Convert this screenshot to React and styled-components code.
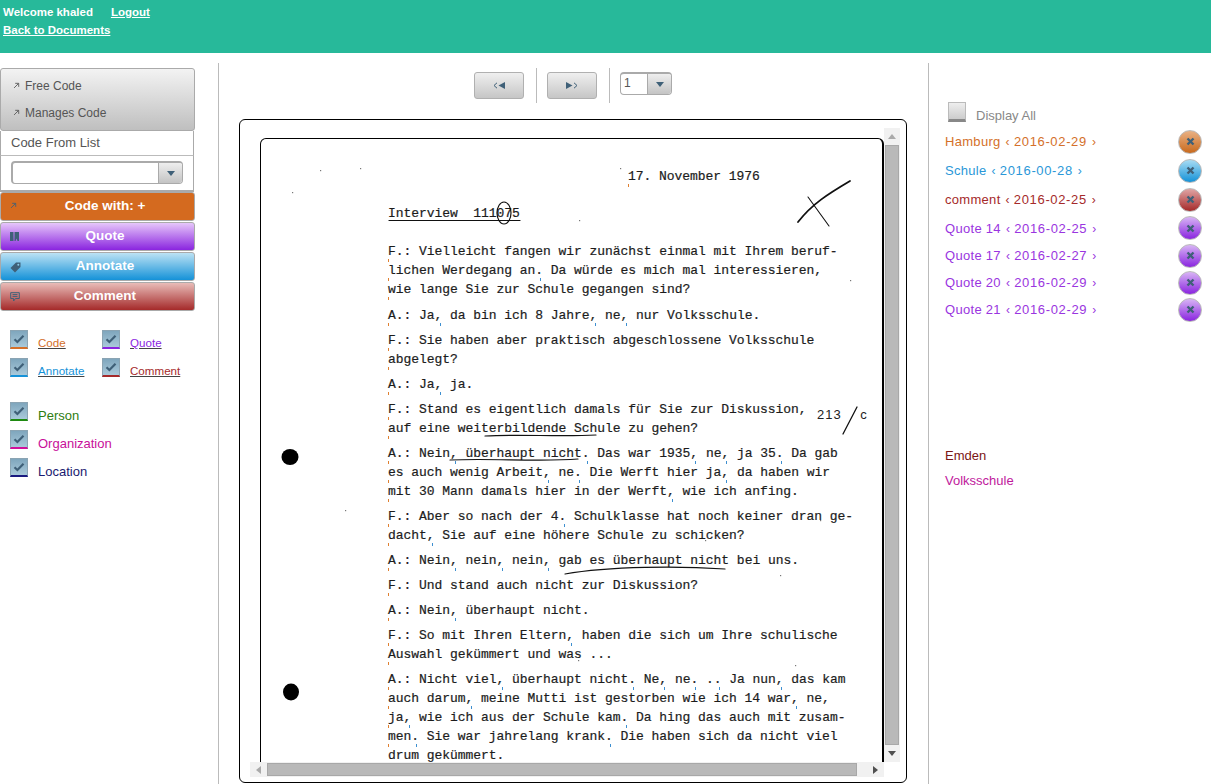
import React from "react";
import styled, { createGlobalStyle } from "styled-components";

const Global = createGlobalStyle`
  html, body { margin: 0; padding: 0; background: #fff; }
  body { font-family: "Liberation Sans", Arial, sans-serif; height: 784px; overflow: hidden; }
  * { box-sizing: border-box; }
`;

const Page = styled.div`display: flex; flex-direction: column; height: 784px; width: 1211px; overflow: hidden;`;
const Header = styled.header`
  height: 53px; background: #27b99a; padding: 5px 3px 0; color: #fff; font-size: 11.5px; font-weight: 700; line-height: 14px;
`;
const HeaderRow = styled.div`display: flex; gap: 18px; height: 18px;`;
const HeaderLink = styled.a`color: #fff; text-decoration: underline;`;
const Body = styled.div`display: grid; grid-template-columns: 218px 711px 1fr; margin-top: 10px; flex: 1; min-height: 0;`;

const Left = styled.aside`padding-top: 5px;`;
const ToolPanel = styled.div`
  width: 195px; height: 63px; border: 1px solid #aaa; border-radius: 3px;
  background: linear-gradient(#f3f3f3, #bfbfbf); padding: 3px 0 0 12px;
  display: flex; flex-direction: column;
`;
const ToolItem = styled.div`
  display: flex; align-items: center; gap: 5px; height: 27px; font-size: 12px; color: #555;
`;
const ListHead = styled.div`
  width: 194px; height: 25px; border: 1px solid #aaa; border-top: 0; border-bottom-color: #bbb;
  padding-left: 10px; font-size: 13px; line-height: 24px; color: #555;
`;
const ListBody = styled.div`
  width: 194px; height: 36px; border: 1px solid #aaa; border-width: 0 1px 2px; padding: 5px 0 0 10px;
`;
const Combo = styled.div`
  display: flex; width: 172px; height: 23px; border: 1px solid #aaa; border-top-width: 2px; border-left-width: 2px; border-radius: 4px; overflow: hidden; background: #fff;
`;
const ComboField = styled.div`flex: 1; font-size: 12px; color: #555; padding: 0 3px; line-height: 18px;`;
const ComboArrow = styled.div`
  width: 24px; background: linear-gradient(#eee, #c4c4c4); border-left: 1px solid #aaa;
  display: flex; align-items: center; justify-content: center;
  &::after { content: ""; border: 4px solid transparent; border-top: 5px solid #3f6078; border-bottom: 0; }
`;
const gradients = {
  code: "#d46a1f, #d46a1f",
  quote: "#e6c6fa, #8a25df",
  annotate: "#bce2f4, #1592d8",
  comment: "#e8bcb8, #a52a2a",
};
const ActionButton = styled.button`
  display: block; position: relative; width: 195px; height: 29px; margin: 0 0 1px; padding: 0 0 2px 15px;
  border: 1px solid #aaa; border-radius: 3px; background: linear-gradient(${p => gradients[p.$kind]});
  color: #fff; font: 700 13.5px "Liberation Sans", Arial, sans-serif; text-align: center;
`;
const ActionIcon = styled.span`position: absolute; left: 9px; top: 9px; color: #3f6078; display: flex;`;
const ActionStack = styled.div``;

const Checks = styled.div`
  display: grid; grid-template-columns: 92px 92px; grid-auto-rows: 28px; padding-left: 10px; margin-top: 19px;
`;
const Checks2 = styled(Checks)`grid-template-columns: 180px; margin-top: 16px;`;
const CheckCell = styled.div`display: flex; align-items: flex-start; gap: 10px;`;
const Box = styled.span`
  width: 18px; height: 19px; flex: none; display: flex; align-items: center; justify-content: center;
  background: linear-gradient(#7fa6bd, #a9c9da); border: 1px solid #8ba4b3; border-bottom: 2px solid ${p => p.$c}; color: #3f6078;
`;
const CheckLink = styled.a`
  font-size: 11.6px; color: ${p => p.$c}; text-decoration: underline; text-decoration-color: #444; line-height: 14px; margin-top: 6px;
`;
const CheckLabel = styled.span`font-size: 13px; color: ${p => p.$c}; line-height: 15px; margin-top: 6px;`;

const Center = styled.main`border-left: 1px solid #bbb; border-right: 1px solid #bbb; display: flex; flex-direction: column;`;
const Toolbar = styled.div`height: 56px; display: flex; justify-content: center; align-items: flex-start; padding: 5px 1px 0 0;`;
const NavButton = styled.button`
  width: 50px; height: 27px; margin-top: 4px; padding: 0; border: 1px solid #b0b0b0; border-radius: 3px;
  background: linear-gradient(#efefef, #c6c6c6); display: flex; align-items: center; justify-content: center; color: #3f6078;
`;
const Sep = styled.div`width: 1px; height: 35px; background: #bbb; margin: 0 10px 0 12px;`;
const PageCombo = styled.div`
  display: flex; width: 52px; height: 23px; margin-top: 4px; border: 1px solid #aaa; border-top-width: 2px; border-radius: 4px; overflow: hidden; background: #fff;
`;
const PageArrow = styled(ComboArrow)`width: 24px;`;
const Frame = styled.div`
  width: 668px; height: 664px; margin-left: 20px; border: 1px solid #000; border-radius: 6px; background: #fff;
  padding: 8px 6px 5px 10px; display: grid; grid-template-columns: 634px 16px; grid-template-rows: 634px 15px;
`;
const SheetCell = styled.div`padding: 10px 0 0 10px; min-height: 0; overflow: hidden;`;
const Sheet = styled.div`
  position: relative; height: 100%; overflow: hidden; border: 1px solid #000; border-width: 1px 2px 0 1px; border-radius: 6px 6px 0 0;
  padding: 28px 0 0 127px; font-family: "Liberation Mono", monospace; font-size: 13px; letter-spacing: -.05px; line-height: 19px; color: #1c1c1c; background: #fff;
  -webkit-text-stroke: .2px #1c1c1c;
`;
const Para = styled.div`margin-bottom: ${p => p.$mb ?? 6}px; margin-left: ${p => p.$ml ?? 0}px; white-space: pre;`;
const DocLine = styled.div`
  position: relative; height: 19px;
  &::before { content: ""; position: absolute; left: 0; bottom: -1px; width: 1px; height: 3px; background: ${p => p.$a ? "#e08030" : "transparent"}; }
`;
const Mark = styled.span`
  position: relative;
  &::after { content: ""; position: absolute; left: 5px; top: 15px; width: 1px; height: 3px; background: #3d8fd0; }
`;
const Overlay = styled.svg`position: absolute; left: 0; top: 0;`;
const Hand = styled.span`
  position: absolute; left: 556px; top: 268px; font: 13px/16px "Liberation Sans", sans-serif; letter-spacing: 1px; color: #222; -webkit-text-stroke: 0;
`;
const VBar = styled.div`background: #f1f1f1; display: flex; flex-direction: column; align-items: center; padding: 0 1px;`;
const HBar = styled.div`background: #f1f1f1; display: flex; align-items: center; height: 15px;`;
const Thumb = styled.div`flex: 1; background: #b9b9b9; border: 1px solid #a8a8a8;`;
const ArrowSlot = styled.div`
  flex: none; width: ${p => (p.$h ? "17px" : "14px")}; height: ${p => (p.$h ? "15px" : "17px")}; display: flex; align-items: center; justify-content: center;
  &::after { content: ""; border: 4px solid transparent; ${p => `border-${p.$dir}: 5px solid ${p.$c}; border-${{top:"bottom",bottom:"top",left:"right",right:"left"}[p.$dir]}: 0;`} }
`;
const ThumbV = styled(Thumb)`width: 14px;`;
const ThumbH = styled(Thumb)`height: 13px; margin: 0 10px 0 0;`;

const Right = styled.aside`padding: 39px 9px 0 16px;`;
const DisplayAll = styled.div`display: flex; align-items: flex-start; gap: 10px; padding-left: 3px; height: 20px; font-size: 13px; line-height: 15px; color: #888; margin-bottom: 5px;`;
const DisplayText = styled.span`margin-top: 6px;`;
const GrayBox = styled.span`width: 18px; height: 20px; background: linear-gradient(#eee, #ccc); border: 1px solid #bbb; border-bottom: 3px solid #888;`;
const Item = styled.div`
  display: flex; align-items: center; justify-content: space-between; height: ${p => p.$h}px; color: ${p => p.$c}; font-size: 13px; letter-spacing: .3px;
`;
const ItemOpen = styled.span`font-size: 12px; margin: 0 4px 0 5px;`;
const ItemClose = styled.span`font-size: 12px; margin-left: 5px;`;
const ItemDate = styled.span`letter-spacing: .65px;`;
const XButton = styled.span`
  width: 24px; height: 24px; border-radius: 50%; border: 1px solid #bbb; background: linear-gradient(${p => p.$g}); display: flex; align-items: center; justify-content: center; color: #3f6078; flex: none;
`;
const Entities = styled.div`margin-top: 120px; font-size: 13px;`;
const Entity = styled.div`height: 25px; line-height: 25px; color: ${p => p.$c};`;

const Check = () => (
  <svg width="12" height="10" viewBox="0 0 12 10"><path d="M1.5 5.2 4.4 8 10.5 1.8" fill="none" stroke="currentColor" strokeWidth="2.2" /></svg>
);
const Arrow = ({ c = "#555" }) => (
  <svg width="7" height="7" viewBox="0 0 8 8"><path d="M1.2 6.8 6.2 1.8M2.5 1.5h4v4" fill="none" stroke={c} strokeWidth="1" /></svg>
);
const BookIcon = () => (
  <svg width="9" height="9" viewBox="0 0 9 9"><path d="M0 0h3.5v9H0zM4.5 0H9v9H7.5L6.7 6.5 5.5 9h-1z" fill="currentColor" /></svg>
);
const TagIcon = () => (
  <svg width="11" height="11" viewBox="0 0 11 11"><path d="M6 .5h4.5V5L5 10.5.5 6z" fill="currentColor" /><circle cx="8.3" cy="2.7" r="1" fill="#8ccbe8" /></svg>
);
const ChatIcon = () => (
  <svg width="10" height="10" viewBox="0 0 10 10"><path d="M.7.7h8.6v5.8H5.5L3.6 9V6.5H.7zM2.5 2.6h5M2.5 4.4h5" fill="none" stroke="currentColor" strokeWidth="1" /></svg>
);
const Cross = () => (
  <svg width="9" height="9" viewBox="0 0 9 9"><path d="M1.5 1.5l6 6M7.5 1.5l-6 6" stroke="currentColor" strokeWidth="2.4" /></svg>
);
const PrevIcon = () => (
  <svg width="12" height="7" viewBox="0 0 12 7"><path d="M4 .8 1 3.5 4 6.2" fill="none" stroke="currentColor" /><path d="M12 0v7L5.5 3.5z" fill="currentColor" /></svg>
);
const NextIcon = () => (
  <svg width="12" height="7" viewBox="0 0 12 7"><path d="M0 0v7l6.5-3.5z" fill="currentColor" /><path d="M8 .8 11 3.5 8 6.2" fill="none" stroke="currentColor" /></svg>
);

const doc = [
  ["F.: Vielleicht fangen wir zunächst einmal mit Ihrem beruf-", "lichen Werdegang an. Da würde es mich mal interessieren,", "wie lange Sie zur Schule gegangen sind?"],
  ["A.: Ja, da bin ich 8 Jahre, ne, nur Volksschule."],
  ["F.: Sie haben aber praktisch abgeschlossene Volksschule", "abgelegt?"],
  ["A.: Ja, ja."],
  ["F.: Stand es eigentlich damals für Sie zur Diskussion,", "auf eine weiterbildende Schule zu gehen?"],
  ["A.: Nein, überhaupt nicht. Das war 1935, ne, ja 35. Da gab", "es auch wenig Arbeit, ne. Die Werft hier ja, da haben wir", "mit 30 Mann damals hier in der Werft, wie ich anfing."],
  ["F.: Aber so nach der 4. Schulklasse hat noch keiner dran ge-", "dacht, Sie auf eine höhere Schule zu schicken?"],
  ["A.: Nein, nein, nein, gab es überhaupt nicht bei uns."],
  ["F.: Und stand auch nicht zur Diskussion?"],
  ["A.: Nein, überhaupt nicht."],
  ["F.: So mit Ihren Eltern, haben die sich um Ihre schulische", "Auswahl gekümmert und was ..."],
  ["A.: Nicht viel, überhaupt nicht. Ne, ne. .. Ja nun, das kam", "auch darum, meine Mutti ist gestorben wie ich 14 war, ne,", "ja, wie ich aus der Schule kam. Da hing das auch mit zusam-", "men. Sie war jahrelang krank. Die haben sich da nicht viel", "drum gekümmert."],
];

const renderLine = (s) =>
  s.split(/([,.](?=\s))/).map((t, i) => (/^[,.]$/.test(t) ? <Mark key={i}>{t}</Mark> : <React.Fragment key={i}>{t}</React.Fragment>));

const specks = [[292,192],[360,168],[579,220],[345,510],[820,520],[578,660],[795,665],[780,575],[320,170],[705,540],[850,280],[620,168]];

const items = [
  ["Hamburg", "2016-02-29", "#d4702a", "#e9b184, #c96a1d", 29],
  ["Schule", "2016-00-28", "#2a97d8", "#a8dcf3, #1592d8", 29],
  ["comment", "2016-02-25", "#a52a2a", "#e0a5a5, #a52a2a", 29],
  ["Quote 14", "2016-02-25", "#9a35e0", "#d8b5f5, #8a25df", 28],
  ["Quote 17", "2016-02-27", "#9a35e0", "#d8b5f5, #8a25df", 27],
  ["Quote 20", "2016-02-29", "#9a35e0", "#d8b5f5, #8a25df", 27],
  ["Quote 21", "2016-02-29", "#9a35e0", "#d8b5f5, #8a25df", 27],
];

export default function App() {
  return (
    <Page>
      <Global />
      <Header>
        <HeaderRow>Welcome khaled <HeaderLink>Logout</HeaderLink></HeaderRow>
        <HeaderLink>Back to Documents</HeaderLink>
      </Header>
      <Body>
        <Left>
          <ToolPanel>
            <ToolItem><Arrow />Free Code</ToolItem>
            <ToolItem><Arrow />Manages Code</ToolItem>
          </ToolPanel>
          <ListHead>Code From List</ListHead>
          <ListBody>
            <Combo><ComboField /><ComboArrow /></Combo>
          </ListBody>
          <ActionStack>
            <ActionButton $kind="code"><ActionIcon><Arrow c="#3f6078" /></ActionIcon>Code with: +</ActionButton>
            <ActionButton $kind="quote"><ActionIcon><BookIcon /></ActionIcon>Quote</ActionButton>
            <ActionButton $kind="annotate"><ActionIcon><TagIcon /></ActionIcon>Annotate</ActionButton>
            <ActionButton $kind="comment"><ActionIcon><ChatIcon /></ActionIcon>Comment</ActionButton>
          </ActionStack>
          <Checks>
            <CheckCell><Box $c="#d4702a"><Check /></Box><CheckLink $c="#d4702a">Code</CheckLink></CheckCell>
            <CheckCell><Box $c="#8a25df"><Check /></Box><CheckLink $c="#8a25df">Quote</CheckLink></CheckCell>
            <CheckCell><Box $c="#1592d8"><Check /></Box><CheckLink $c="#1592d8">Annotate</CheckLink></CheckCell>
            <CheckCell><Box $c="#a52a2a"><Check /></Box><CheckLink $c="#a52a2a">Comment</CheckLink></CheckCell>
          </Checks>
          <Checks2>
            <CheckCell><Box $c="#1e8a10"><Check /></Box><CheckLabel $c="#2e7d10">Person</CheckLabel></CheckCell>
            <CheckCell><Box $c="#d0109a"><Check /></Box><CheckLabel $c="#c8109a">Organization</CheckLabel></CheckCell>
            <CheckCell><Box $c="#1a1a80"><Check /></Box><CheckLabel $c="#1a1a70">Location</CheckLabel></CheckCell>
          </Checks2>
        </Left>
        <Center>
          <Toolbar>
            <NavButton><PrevIcon /></NavButton>
            <Sep />
            <NavButton><NextIcon /></NavButton>
            <Sep />
            <PageCombo><ComboField>1</ComboField><PageArrow /></PageCombo>
          </Toolbar>
          <Frame>
            <SheetCell>
              <Sheet>
                <Para $ml={240} $mb={18}><DocLine $a>17. November 1976</DocLine></Para>
                <Para $mb={19}><DocLine>Interview  111075</DocLine></Para>
                {doc.map((p, i) => (
                  <Para key={i} $mb={i === 0 ? 7 : 6}>{p.map((l, j) => <DocLine key={j} $a>{renderLine(l)}</DocLine>)}</Para>
                ))}
                <Overlay width="621" height="623" viewBox="261 139 621 623">
                  <g fill="none" stroke="#111" strokeLinecap="round">
                    <path d="M389 220.5H520" strokeWidth="1.2" />
                    <ellipse cx="504" cy="213" rx="7" ry="11" strokeWidth="1.2" />
                    <path d="M798 222C812 204 828 194 850 181" strokeWidth="1.8" />
                    <path d="M808 197 829 226" strokeWidth="1.1" />
                    <path d="M485 436C520 434 560 437 596 435" strokeWidth="1.2" />
                    <path d="M450 460C490 458 540 462 578 459" strokeWidth="1.2" />
                    <path d="M565 574C610 566 680 566 725 569" strokeWidth="1.2" />
                    <path d="M843 434 857 407" strokeWidth="1.3" />
                  </g>
                  <ellipse cx="290" cy="457" rx="8.5" ry="8" fill="#000" />
                  <ellipse cx="291" cy="692" rx="8" ry="8.5" fill="#000" />
                  {specks.map(([x, y], i) => <rect key={i} x={x} y={y} width="1.2" height="1.2" fill="#777" />)}
                </Overlay>
                <Hand>213 &nbsp; &nbsp;c</Hand>
              </Sheet>
            </SheetCell>
            <VBar>
              <ArrowSlot $dir="bottom" $c="#aaa" />
              <ThumbV />
              <ArrowSlot $dir="top" $c="#505050" />
            </VBar>
            <HBar>
              <ArrowSlot $h $dir="right" $c="#aaa" />
              <ThumbH />
              <ArrowSlot $h $dir="left" $c="#505050" />
            </HBar>
          </Frame>
        </Center>
        <Right>
          <DisplayAll><GrayBox /><DisplayText>Display All</DisplayText></DisplayAll>
          {items.map(([n, d, c, g, h]) => (
            <Item key={n} $c={c} $h={h}>
              <span>{n}<ItemOpen>‹</ItemOpen><ItemDate>{d}</ItemDate><ItemClose>›</ItemClose></span>
              <XButton $g={g}><Cross /></XButton>
            </Item>
          ))}
          <Entities>
            <Entity $c="#7a1515">Emden</Entity>
            <Entity $c="#c0189c">Volksschule</Entity>
          </Entities>
        </Right>
      </Body>
    </Page>
  );
}
